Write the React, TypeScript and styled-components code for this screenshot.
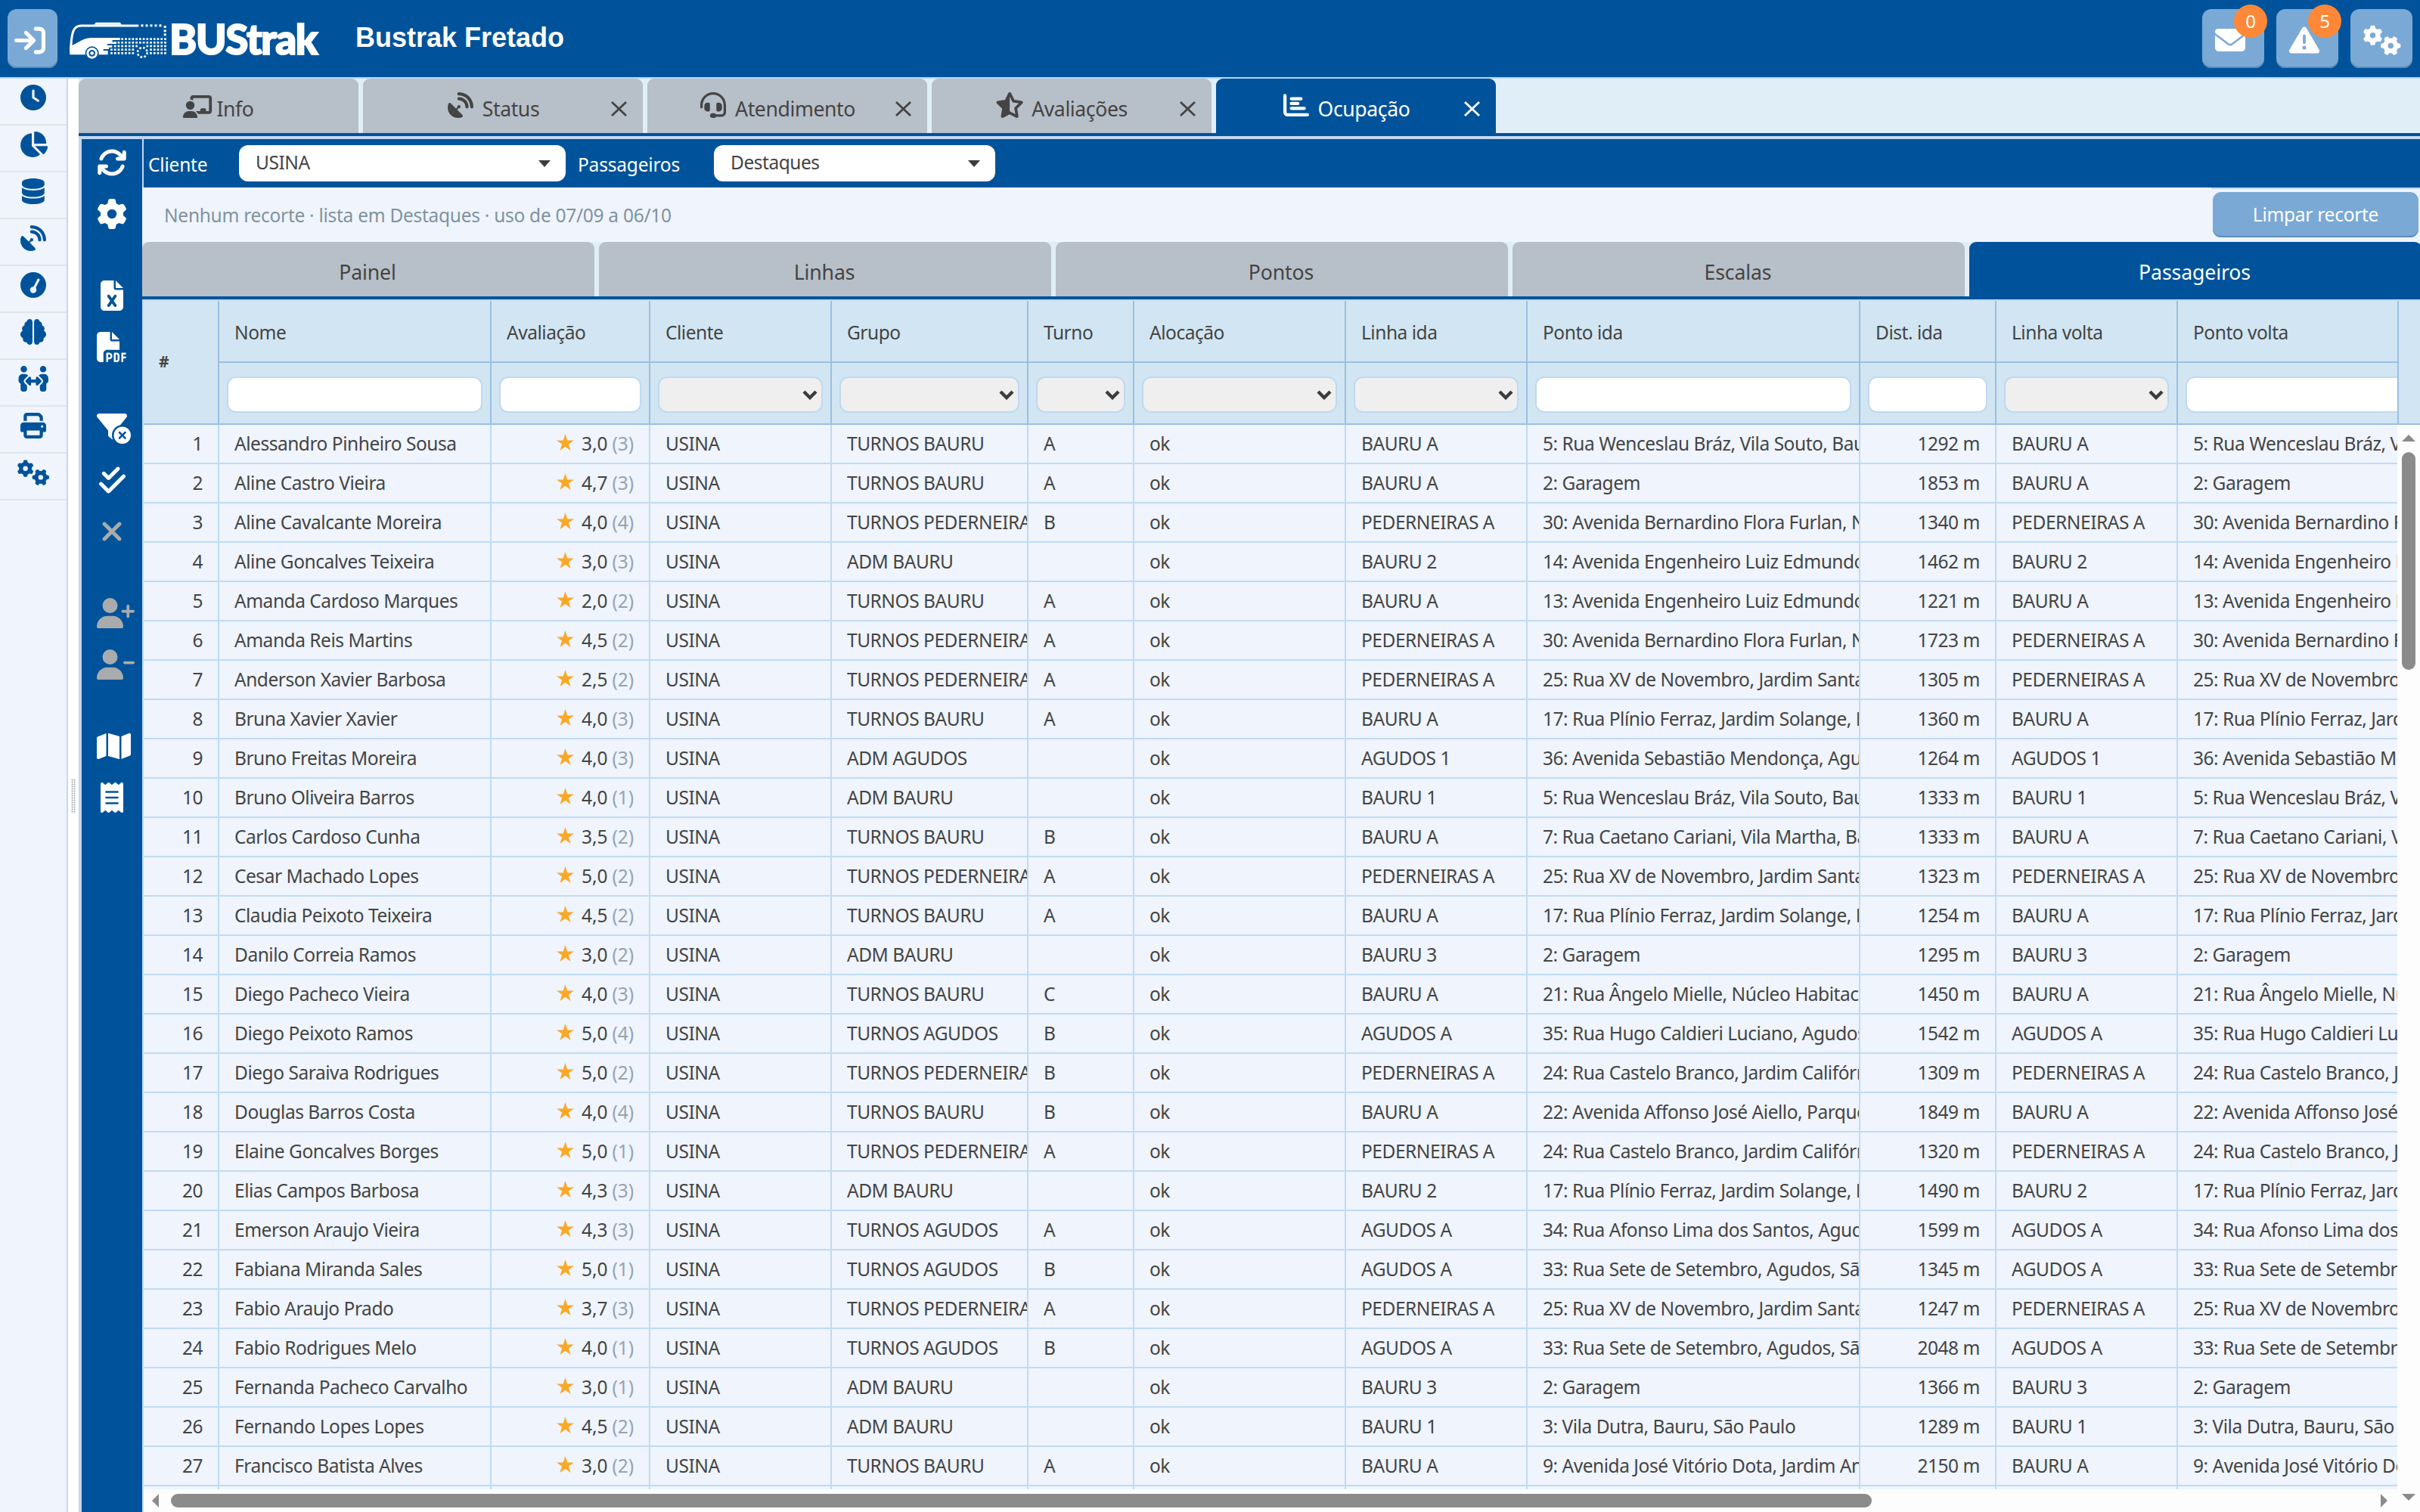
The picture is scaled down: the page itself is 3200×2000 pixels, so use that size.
import React from "react";
import styled, { createGlobalStyle, css } from "styled-components";
import type { IconType } from "react-icons";
import {
  FaArrowRightToBracket,
  FaArrowsRotate,
  FaBrain,
  FaChalkboardUser,
  FaChartBar,
  FaChartPie,
  FaCheckDouble,
  FaClock,
  FaDatabase,
  FaEnvelope,
  FaFileExcel,
  FaFilePdf,
  FaFilterCircleXmark,
  FaGaugeSimpleHigh,
  FaGear,
  FaGears,
  FaHeadset,
  FaMap,
  FaPeopleArrows,
  FaPrint,
  FaReceipt,
  FaSatelliteDish,
  FaStarHalfStroke,
  FaTriangleExclamation,
  FaUserMinus,
  FaUserPlus,
  FaXmark,
} from "react-icons/fa6";

const c = {
  brand: "#00539b",
  soft: "#7ba9d5",
  softEdge: "#5f8dbb",
  line: "#c0dbf3",
  panelLine: "#c3d8ef",
  headLine: "#9bbfe3",
  headBg: "#d1e6f2",
  body: "#eff4fd",
  strip: "#e0eef8",
  tab: "#b7bfc8",
  text: "#444444",
  muted: "#80939f",
  badge: "#ff8838",
  star: "#faa828",
  thumb: "#8b8b8b",
};

const Global = createGlobalStyle`
  html, body { margin: 0; padding: 0; background: #fff; }
  *, *::before, *::after { box-sizing: border-box; }
  body {
    font-family: "Noto Sans", "Open Sans", sans-serif;
    font-size: 24.5px;
    letter-spacing: -0.47px;
    color: ${c.text};
    overflow: hidden;
  }
`;

const Page = styled.div`
  width: 3200px;
  height: 2000px;
  display: flex;
  flex-direction: column;
  overflow: hidden;
`;

/* Icon glyph: $h is the drawn height, $u the glyph width on its 512-unit grid. */
const Glyph = styled.i<{ $h: number; $u?: number }>`
  display: block;
  flex: none;
  height: ${(p) => p.$h}px;
  width: ${(p) => (p.$h * (p.$u ?? 512)) / 512}px;
  svg {
    display: block;
    width: 100%;
    height: 100%;
  }
`;

/* ---------- header ---------- */

const Header = styled.header`
  flex: none;
  height: 104px;
  background: ${c.brand};
  border-bottom: 2px solid #b5d5f3;
  display: flex;
  align-items: flex-start;
  padding: 12px 10px 0;
`;

const HeaderButton = styled.button<{ $w: number; $pad: number }>`
  position: relative;
  width: ${(p) => p.$w}px;
  height: 78px;
  border: 0;
  padding: 4px 0 0 ${(p) => p.$pad}px;
  border-radius: 12px;
  background: ${c.soft};
  box-shadow: inset 0 -2px 0 ${c.softEdge};
  display: flex;
  align-items: center;
  color: #fff;
`;

const Badge = styled.span`
  position: absolute;
  top: -6px;
  left: 42px;
  width: 44px;
  height: 44px;
  border-radius: 50%;
  background: ${c.badge};
  color: #fff;
  font: 24px/44px "Noto Sans", sans-serif;
  text-align: center;
`;

const Logo = styled.svg`
  display: block;
  width: 336px;
  height: 60px;
  margin: 10px 0 0 14px;
  flex: none;
  overflow: visible;
`;

const Title = styled.h1`
  margin: 16px 0 0 44px;
  font: bold 36px/44px "Liberation Sans", Arial, sans-serif;
  letter-spacing: 0;
  color: #fff;
`;

const HeaderActions = styled.div`
  margin-left: auto;
  display: flex;
  gap: 16px;
`;

/* ---------- frame ---------- */

const Frame = styled.div`
  flex: 1;
  min-height: 0;
  display: flex;
`;

const SideMenu = styled.nav`
  flex: none;
  width: 90px;
  background: ${c.body};
  border-right: 2px solid ${c.panelLine};
`;

const SideItem = styled.div`
  height: 62px;
  padding-top: 8px;
  border-bottom: 2px solid #e1e5e7;
  display: flex;
  justify-content: center;
  color: ${c.brand};
`;

const Splitter = styled.div`
  flex: none;
  width: 14px;
  background: #fff;
  padding: 926px 4px 0;
`;

const Grip = styled.div`
  width: 6px;
  height: 46px;
  background-image: radial-gradient(circle, #b3bdc9 0.9px, transparent 1.3px);
  background-size: 3px 3px;
`;

const Workspace = styled.main`
  flex: 1;
  min-width: 0;
  display: flex;
  flex-direction: column;
`;

const TabStrip = styled.div`
  flex: none;
  height: 76px;
  background: ${c.strip};
  border-bottom: 4px solid ${c.brand};
  display: flex;
  gap: 6px;
`;

const tabLook = css<{ $on?: boolean }>`
  flex: none;
  height: 72px;
  border-radius: 9px 9px 0 0;
  background: ${(p) => (p.$on ? c.brand : c.tab)};
  color: ${(p) => (p.$on ? "#fff" : c.text)};
  font-size: 26.6px;
`;

const ModuleTab = styled.div<{ $on?: boolean }>`
  ${tabLook}
  width: 370px;
  display: flex;
  align-items: center;
  letter-spacing: -0.4px;
`;

const ModuleLabel = styled.div<{ $closable: boolean }>`
  flex: 1;
  display: flex;
  justify-content: center;
  align-items: center;
  padding-left: ${(p) => (p.$closable ? 17 : 0)}px;
  gap: ${(p) => (p.$closable ? 12 : 6)}px;
  span {
    padding-top: 8px;
    line-height: 64px;
    white-space: nowrap;
  }
`;

/* Glyphs share a 34px slot next to the label; shorter ones sit on its lower edge. */
const TabIcon = styled.div<{ $w: number }>`
  width: ${(p) => p.$w}px;
  height: 34px;
  margin-top: -2px;
  display: flex;
  justify-content: center;
  align-items: flex-end;
`;

const Close = styled.svg`
  width: 21px;
  height: 20px;
  margin: 7px 21px 0 0;
  fill: none;
  stroke: currentColor;
  stroke-width: 2.8;
`;

const Panel = styled.section`
  flex: 1;
  min-height: 0;
  border-top: 4px solid ${c.panelLine};
  border-left: 4px solid ${c.panelLine};
  display: flex;
`;

const Tools = styled.aside`
  flex: none;
  width: 80px;
  background: ${c.brand};
  padding: 11px 0 0 20px;
  display: flex;
  flex-direction: column;
  gap: 68px;
`;

const ToolGroup = styled.div`
  display: flex;
  flex-direction: column;
  gap: 28px;
`;

const Tool = styled.div<{ $off?: boolean }>`
  width: 40px;
  height: 40px;
  color: ${(p) => (p.$off ? "#a9abad" : "#fff")};
  display: flex;
  justify-content: safe center;
`;

const Content = styled.div`
  flex: 1;
  min-width: 0;
  display: flex;
  flex-direction: column;
`;

const FilterBar = styled.div`
  flex: none;
  height: 64px;
  background: ${c.brand};
  border-left: 2px solid ${c.panelLine};
  display: flex;
  align-items: center;
  padding-left: 6px;
  color: #fff;
`;

const FilterLabel = styled.label<{ $w: number }>`
  width: ${(p) => p.$w}px;
  padding-top: 2px;
  letter-spacing: -0.2px;
`;

const Combo = styled.div<{ $w: number }>`
  width: ${(p) => p.$w}px;
  height: 48px;
  border-radius: 12px;
  background: #fff;
  color: ${c.text};
  padding: 0 20px 0 22px;
  margin-right: 16px;
  display: flex;
  justify-content: space-between;
  align-items: center;
  line-height: 45px;
  span {
    padding-bottom: 3px;
  }
`;

const Caret = styled.i`
  border: 8px solid transparent;
  border-top: 9px solid #3c3c3c;
  border-bottom: 0;
`;

const SummaryBar = styled.div`
  flex: none;
  height: 72px;
  background: ${c.body};
  display: flex;
  justify-content: space-between;
  padding-left: 29px;
  color: ${c.muted};
  line-height: 74px;
  letter-spacing: -0.28px;
`;

const ClearSlot = styled.div`
  width: 276px;
  border-top: 2px solid ${c.panelLine};
  padding: 4px 2px 0;
`;

const ClearButton = styled.button`
  display: block;
  width: 272px;
  height: 60px;
  border: 0;
  border-radius: 11px;
  padding: 0;
  background: ${c.soft};
  box-shadow: inset 0 -2px 0 ${c.softEdge};
  color: #fff;
  font: inherit;
  letter-spacing: inherit;
  line-height: 60px;
`;

const SubTabs = styled.div`
  flex: none;
  height: 76px;
  background: ${c.strip};
  border-bottom: 4px solid ${c.brand};
  display: flex;
  gap: 6px;
  overflow: hidden;
`;

const SubTab = styled.div<{ $on?: boolean }>`
  ${tabLook}
  width: 598px;
  padding: 8px 2px 0 0;
  line-height: 64px;
  letter-spacing: -0.1px;
  text-align: center;
`;

/* ---------- grid ---------- */

const COLS = "100px 360px 210px 240px 260px 140px 280px 240px 440px 180px 240px 290px";

const Grid = styled.div`
  flex: 1;
  min-height: 0;
  border-left: 2px solid ${c.line};
  border-top: 2px solid ${c.line};
  display: flex;
  flex-direction: column;
`;

const GridHead = styled.div`
  flex: none;
  height: 164px;
  display: grid;
  grid-template-columns: ${COLS} 1fr;
  grid-template-rows: 82px 82px;
  background: ${c.headBg};
`;

const HeadCell = styled.div<{ $last?: boolean }>`
  border-right: ${(p) => (p.$last ? 0 : 2)}px solid ${c.headLine};
  border-bottom: 2px solid ${c.headLine};
  padding: 2px 0 0 20px;
  line-height: 79px;
  white-space: nowrap;
  overflow: hidden;
`;

const IndexHead = styled(HeadCell)`
  grid-row: span 2;
  font-size: 21px;
  font-weight: 700;
  line-height: 160px;
  padding-top: 0;
`;

const CornerHead = styled.div`
  grid-row: 1 / span 2;
  grid-column: 13;
  border-left: 2px solid ${c.headLine};
  border-bottom: 2px solid ${c.headLine};
`;

const FilterCell = styled.div<{ $last?: boolean }>`
  border-right: ${(p) => (p.$last ? 0 : 2)}px solid ${c.headLine};
  border-bottom: 2px solid ${c.headLine};
  padding: 18px 10px 0;
  overflow: hidden;
`;

const FilterField = styled.div<{ $select?: boolean; $wide?: boolean }>`
  height: 48px;
  width: ${(p) => (p.$wide ? "420px" : "100%")};
  border: 2px solid #c1d9ef;
  border-radius: 12px;
  background: ${(p) => (p.$select ? "#efefef" : "#fff")};
  display: flex;
  justify-content: flex-end;
  align-items: center;
  padding-right: 5px;
  svg {
    width: 20px;
    height: 13px;
    fill: none;
    stroke: #3c3c3c;
    stroke-width: 4.4;
  }
`;

const GridBody = styled.div`
  flex: 1;
  min-height: 0;
  display: flex;
`;

const Rows = styled.div`
  flex: none;
  width: 2980px;
  height: 1408px;
  overflow: hidden;
  background: ${c.body};
`;

const Row = styled.div`
  display: grid;
  grid-template-columns: ${COLS};
  height: 52px;
`;

const Cell = styled.div<{ $right?: boolean; $open?: boolean }>`
  border-right: ${(p) => (p.$open ? 0 : 2)}px solid ${c.line};
  border-bottom: 2px solid ${c.line};
  padding-left: 20px;
  padding-right: ${(p) => (p.$right ? 20 : 0)}px;
  text-align: ${(p) => (p.$right ? "right" : "left")};
  line-height: 50px;
  white-space: nowrap;
  overflow: hidden;
`;

const RatingCell = styled(Cell)`
  letter-spacing: -0.1px;
`;

const Star = styled.svg`
  width: 23px;
  height: 22px;
  fill: ${c.star};
  margin-right: 10px;
  vertical-align: 0;
`;

const Votes = styled.span`
  color: #94a4b2;
`;

const VScroll = styled.div`
  flex: 1;
  background: #fdfdfd;
  display: flex;
  flex-direction: column;
  align-items: center;
  padding-top: 13px;
`;

const VThumb = styled.div`
  width: 18px;
  height: 288px;
  margin-top: 14px;
  border-radius: 9px;
  background: ${c.thumb};
`;

const HScroll = styled.div`
  flex: none;
  height: 30px;
  background: #fdfdfd;
  display: flex;
  align-items: flex-start;
  padding: 6px 6px 0 11px;
`;

const HThumb = styled.div`
  width: 2249px;
  height: 18px;
  margin: 0 auto 0 16px;
  border-radius: 9px;
  background: ${c.thumb};
`;

const Arrow = styled.i<{ $dir: "up" | "down" | "left" | "right" }>`
  border: 9px solid transparent;
  ${(p) => p.$dir === "up" && `border-top: 0; border-bottom-color: ${c.thumb};`}
  ${(p) => p.$dir === "down" && `border-bottom: 0; border-top-color: ${c.thumb}; margin-left: 19px;`}
  ${(p) => p.$dir === "left" && `border-left: 0; border-right-color: ${c.thumb};`}
  ${(p) => p.$dir === "right" && `border-right: 0; border-left-color: ${c.thumb};`}
`;

/* ---------- data ---------- */

const stops: Record<number, string> = {
  2: "Garagem",
  3: "Vila Dutra, Bauru, São Paulo",
  5: "Rua Wenceslau Bráz, Vila Souto, Bauru",
  7: "Rua Caetano Cariani, Vila Martha, Bauru",
  9: "Avenida José Vitório Dota, Jardim América",
  13: "Avenida Engenheiro Luiz Edmundo Coube",
  14: "Avenida Engenheiro Luiz Edmundo Coube",
  17: "Rua Plínio Ferraz, Jardim Solange, Bauru",
  21: "Rua Ângelo Mielle, Núcleo Habitacional",
  22: "Avenida Affonso José Aiello, Parque",
  24: "Rua Castelo Branco, Jardim Califórnia",
  25: "Rua XV de Novembro, Jardim Santana",
  30: "Avenida Bernardino Flora Furlan, Núcleo",
  33: "Rua Sete de Setembro, Agudos, São Paulo",
  34: "Rua Afonso Lima dos Santos, Agudos",
  35: "Rua Hugo Caldieri Luciano, Agudos",
  36: "Avenida Sebastião Mendonça, Agudos",
};

// name, rating, votes, group, shift, line, stop, distance
type Passenger = [string, string, number, string, string, string, number, number];

const TB = "TURNOS BAURU";
const TP = "TURNOS PEDERNEIRAS";
const TA = "TURNOS AGUDOS";
const AB = "ADM BAURU";
const AA = "ADM AGUDOS";
const PA = "PEDERNEIRAS A";

const passengers: Passenger[] = [
  ["Alessandro Pinheiro Sousa", "3,0", 3, TB, "A", "BAURU A", 5, 1292],
  ["Aline Castro Vieira", "4,7", 3, TB, "A", "BAURU A", 2, 1853],
  ["Aline Cavalcante Moreira", "4,0", 4, TP, "B", PA, 30, 1340],
  ["Aline Goncalves Teixeira", "3,0", 3, AB, "", "BAURU 2", 14, 1462],
  ["Amanda Cardoso Marques", "2,0", 2, TB, "A", "BAURU A", 13, 1221],
  ["Amanda Reis Martins", "4,5", 2, TP, "A", PA, 30, 1723],
  ["Anderson Xavier Barbosa", "2,5", 2, TP, "A", PA, 25, 1305],
  ["Bruna Xavier Xavier", "4,0", 3, TB, "A", "BAURU A", 17, 1360],
  ["Bruno Freitas Moreira", "4,0", 3, AA, "", "AGUDOS 1", 36, 1264],
  ["Bruno Oliveira Barros", "4,0", 1, AB, "", "BAURU 1", 5, 1333],
  ["Carlos Cardoso Cunha", "3,5", 2, TB, "B", "BAURU A", 7, 1333],
  ["Cesar Machado Lopes", "5,0", 2, TP, "A", PA, 25, 1323],
  ["Claudia Peixoto Teixeira", "4,5", 2, TB, "A", "BAURU A", 17, 1254],
  ["Danilo Correia Ramos", "3,0", 2, AB, "", "BAURU 3", 2, 1295],
  ["Diego Pacheco Vieira", "4,0", 3, TB, "C", "BAURU A", 21, 1450],
  ["Diego Peixoto Ramos", "5,0", 4, TA, "B", "AGUDOS A", 35, 1542],
  ["Diego Saraiva Rodrigues", "5,0", 2, TP, "B", PA, 24, 1309],
  ["Douglas Barros Costa", "4,0", 4, TB, "B", "BAURU A", 22, 1849],
  ["Elaine Goncalves Borges", "5,0", 1, TP, "A", PA, 24, 1320],
  ["Elias Campos Barbosa", "4,3", 3, AB, "", "BAURU 2", 17, 1490],
  ["Emerson Araujo Vieira", "4,3", 3, TA, "A", "AGUDOS A", 34, 1599],
  ["Fabiana Miranda Sales", "5,0", 1, TA, "B", "AGUDOS A", 33, 1345],
  ["Fabio Araujo Prado", "3,7", 3, TP, "A", PA, 25, 1247],
  ["Fabio Rodrigues Melo", "4,0", 1, TA, "B", "AGUDOS A", 33, 2048],
  ["Fernanda Pacheco Carvalho", "3,0", 1, AB, "", "BAURU 3", 2, 1366],
  ["Fernando Lopes Lopes", "4,5", 2, AB, "", "BAURU 1", 3, 1289],
  ["Francisco Batista Alves", "3,0", 2, TB, "A", "BAURU A", 9, 2150],
];

const columns: { title: string; select?: boolean }[] = [
  { title: "Nome" },
  { title: "Avaliação" },
  { title: "Cliente", select: true },
  { title: "Grupo", select: true },
  { title: "Turno", select: true },
  { title: "Alocação", select: true },
  { title: "Linha ida", select: true },
  { title: "Ponto ida" },
  { title: "Dist. ida" },
  { title: "Linha volta", select: true },
  { title: "Ponto volta" },
];

type IconSpec = { icon: IconType; u?: number; off?: boolean };

const sideIcons: IconSpec[] = [
  { icon: FaClock },
  { icon: FaChartPie, u: 576 },
  { icon: FaDatabase, u: 448 },
  { icon: FaSatelliteDish },
  { icon: FaGaugeSimpleHigh },
  { icon: FaBrain },
  { icon: FaPeopleArrows, u: 640 },
  { icon: FaPrint },
  { icon: FaGears, u: 640 },
];

const toolGroups: IconSpec[][] = [
  [{ icon: FaArrowsRotate }, { icon: FaGear }],
  [{ icon: FaFileExcel, u: 384 }, { icon: FaFilePdf }],
  [
    { icon: FaFilterCircleXmark, u: 576 },
    { icon: FaCheckDouble, u: 448 },
    { icon: FaXmark, u: 384, off: true },
  ],
  [
    { icon: FaUserPlus, u: 640, off: true },
    { icon: FaUserMinus, u: 640, off: true },
  ],
  [
    { icon: FaMap, u: 576 },
    { icon: FaReceipt, u: 384 },
  ],
];

type Module = IconSpec & { label: string; h: number; slot: number; closable: boolean; on?: boolean };

const modules: Module[] = [
  { label: "Info", icon: FaChalkboardUser, u: 640, h: 30.5, slot: 38, closable: false },
  { label: "Status", icon: FaSatelliteDish, h: 34, slot: 34, closable: true },
  { label: "Atendimento", icon: FaHeadset, h: 34, slot: 34, closable: true },
  { label: "Avaliações", icon: FaStarHalfStroke, u: 576, h: 34, slot: 34, closable: true },
  { label: "Ocupação", icon: FaChartBar, h: 34, slot: 34, closable: true, on: true },
];

const subTabs = ["Painel", "Linhas", "Pontos", "Escalas", "Passageiros"];

/* ---------- pieces ---------- */

const dotRows = [125, 139, 153, 167, 181];
const dotCols = Array.from({ length: 13 }, (_, i) => 245 + i * 14.2);

function Brand() {
  return (
    <Logo viewBox="30 36 1008 180" role="img" aria-label="BUStrak">
      <g fill="#fff">
        <path d="M41 180 C41 140 44 112 50 95 Q58 72 82 72 H310" fill="none" stroke="#fff" strokeWidth="9" />
        <path d="M133 68 L140 59 H236 L243 68 Z" />
        <path d="M37 187 V152 C66 146 84 121 122 120 H236 V129 H206 V137 H222 V144 H186 V150 H205 V158 H192 V165 H170 V171 H188 V187 Z" />
        <circle cx="125" cy="181" r="27" fill={c.brand} />
        <circle cx="125" cy="181" r="22" />
        <circle cx="125" cy="181" r="13" fill={c.brand} />
        <circle cx="125" cy="181" r="7" />
        {dotRows.map((y, r) =>
          dotCols
            .concat(r > 0 ? [230.8, 216.6] : [])
            .concat(r > 2 ? [202.4] : [])
            .filter((x) => Math.hypot(x - 325, y - 178) > 29)
            .map((x) => <rect key={`${x}-${y}`} x={x - 4} y={y - 4} width="8" height="8" />)
        )}
        {[324, 342, 360, 378, 396].map((x) => (
          <rect key={x} x={x - 4.5} y={67} width="9" height="9" />
        ))}
        {[76, 92, 107].map((y) => (
          <rect key={y} x={410} y={y - 4} width="9" height="9" />
        ))}
        <circle cx="325" cy="178" r="19" fill="none" stroke="#fff" strokeWidth="8" strokeDasharray="8 6.9" />
      </g>
      <text
        x="432"
        y="186"
        textLength="586"
        lengthAdjust="spacingAndGlyphs"
        fontFamily="Lato, sans-serif"
        fontWeight="900"
        fontSize="168"
        letterSpacing="-4"
        fill="#fff"
        stroke="#fff"
        strokeWidth="6"
      >
        BUStrak
      </text>
    </Logo>
  );
}

function Field({ select, wide }: { select?: boolean; wide?: boolean }) {
  return (
    <FilterField $select={select} $wide={wide}>
      {select && (
        <svg viewBox="0 0 20 13">
          <path d="M2 2 L10 10 L18 2" />
        </svg>
      )}
    </FilterField>
  );
}

function PassengerRow({ n, data }: { n: number; data: Passenger }) {
  const [name, rating, votes, group, shift, line, stop, dist] = data;
  const stopText = `${stop}: ${stops[stop]}`;
  return (
    <Row>
      <Cell $right>{n}</Cell>
      <Cell>{name}</Cell>
      <RatingCell $right>
        <Star viewBox="0 0 22 21">
          <path d="M11 0 L13.6 8 H22 L15.2 12.9 L17.8 21 L11 16 L4.2 21 L6.8 12.9 L0 8 H8.4 Z" />
        </Star>
        {rating} <Votes>({votes})</Votes>
      </RatingCell>
      <Cell>USINA</Cell>
      <Cell>{group}</Cell>
      <Cell>{shift}</Cell>
      <Cell>ok</Cell>
      <Cell>{line}</Cell>
      <Cell>{stopText}</Cell>
      <Cell $right>{dist} m</Cell>
      <Cell>{line}</Cell>
      <Cell $open>{stopText}</Cell>
    </Row>
  );
}

export default function App() {
  const lastColumn = columns.length - 1;
  return (
    <Page>
      <Global />
      <Header>
        <HeaderButton $w={66} $pad={9}>
          <Glyph $h={41}>
            <FaArrowRightToBracket />
          </Glyph>
        </HeaderButton>
        <Brand />
        <Title>Bustrak Fretado</Title>
        <HeaderActions>
          <HeaderButton $w={82} $pad={17}>
            <Glyph $h={40}>
              <FaEnvelope />
            </Glyph>
            <Badge>0</Badge>
          </HeaderButton>
          <HeaderButton $w={82} $pad={17}>
            <Glyph $h={40}>
              <FaTriangleExclamation />
            </Glyph>
            <Badge>5</Badge>
          </HeaderButton>
          <HeaderButton $w={82} $pad={17}>
            <Glyph $h={40} $u={640}>
              <FaGears />
            </Glyph>
          </HeaderButton>
        </HeaderActions>
      </Header>

      <Frame>
        <SideMenu>
          {sideIcons.map(({ icon: Icon, u }, i) => (
            <SideItem key={i}>
              <Glyph $h={34} $u={u}>
                <Icon />
              </Glyph>
            </SideItem>
          ))}
        </SideMenu>
        <Splitter>
          <Grip />
        </Splitter>

        <Workspace>
          <TabStrip>
            {modules.map(({ label, icon: Icon, u, h, slot, closable, on }) => (
              <ModuleTab key={label} $on={on}>
                <ModuleLabel $closable={closable}>
                  <TabIcon $w={slot}>
                    <Glyph $h={h} $u={u}>
                      <Icon />
                    </Glyph>
                  </TabIcon>
                  <span>{label}</span>
                </ModuleLabel>
                {closable && (
                  <Close viewBox="0 0 21 20">
                    <path d="M1 1 L20 19 M20 1 L1 19" />
                  </Close>
                )}
              </ModuleTab>
            ))}
          </TabStrip>

          <Panel>
            <Tools>
              {toolGroups.map((group, g) => (
                <ToolGroup key={g}>
                  {group.map(({ icon: Icon, u, off }, i) => (
                    <Tool key={i} $off={off}>
                      <Glyph $h={40} $u={u}>
                        <Icon />
                      </Glyph>
                    </Tool>
                  ))}
                </ToolGroup>
              ))}
            </Tools>

            <Content>
              <FilterBar>
                <FilterLabel $w={120}>Cliente</FilterLabel>
                <Combo $w={432}>
                  <span>USINA</span>
                  <Caret />
                </Combo>
                <FilterLabel $w={180}>Passageiros</FilterLabel>
                <Combo $w={372}>
                  <span>Destaques</span>
                  <Caret />
                </Combo>
              </FilterBar>

              <SummaryBar>
                <span>Nenhum recorte · lista em Destaques · uso de 07/09 a 06/10</span>
                <ClearSlot>
                  <ClearButton>Limpar recorte</ClearButton>
                </ClearSlot>
              </SummaryBar>

              <SubTabs>
                {subTabs.map((t, i) => (
                  <SubTab key={t} $on={i === 4}>
                    {t}
                  </SubTab>
                ))}
              </SubTabs>

              <Grid>
                <GridHead>
                  <IndexHead>#</IndexHead>
                  {columns.map((col, i) => (
                    <HeadCell key={col.title} $last={i === lastColumn}>
                      {col.title}
                    </HeadCell>
                  ))}
                  <CornerHead />
                  {columns.map((col, i) => (
                    <FilterCell key={col.title} $last={i === lastColumn}>
                      <Field select={col.select} wide={i === lastColumn} />
                    </FilterCell>
                  ))}
                </GridHead>
                <GridBody>
                  <Rows>
                    {passengers.map((p, i) => (
                      <PassengerRow key={p[0]} n={i + 1} data={p} />
                    ))}
                    <Row>
                      {Array.from({ length: 12 }, (_, i) => (
                        <Cell key={i} $open={i === 11} />
                      ))}
                    </Row>
                  </Rows>
                  <VScroll>
                    <Arrow $dir="up" />
                    <VThumb />
                  </VScroll>
                </GridBody>
                <HScroll>
                  <Arrow $dir="left" />
                  <HThumb />
                  <Arrow $dir="right" />
                  <Arrow $dir="down" />
                </HScroll>
              </Grid>
            </Content>
          </Panel>
        </Workspace>
      </Frame>
    </Page>
  );
}
